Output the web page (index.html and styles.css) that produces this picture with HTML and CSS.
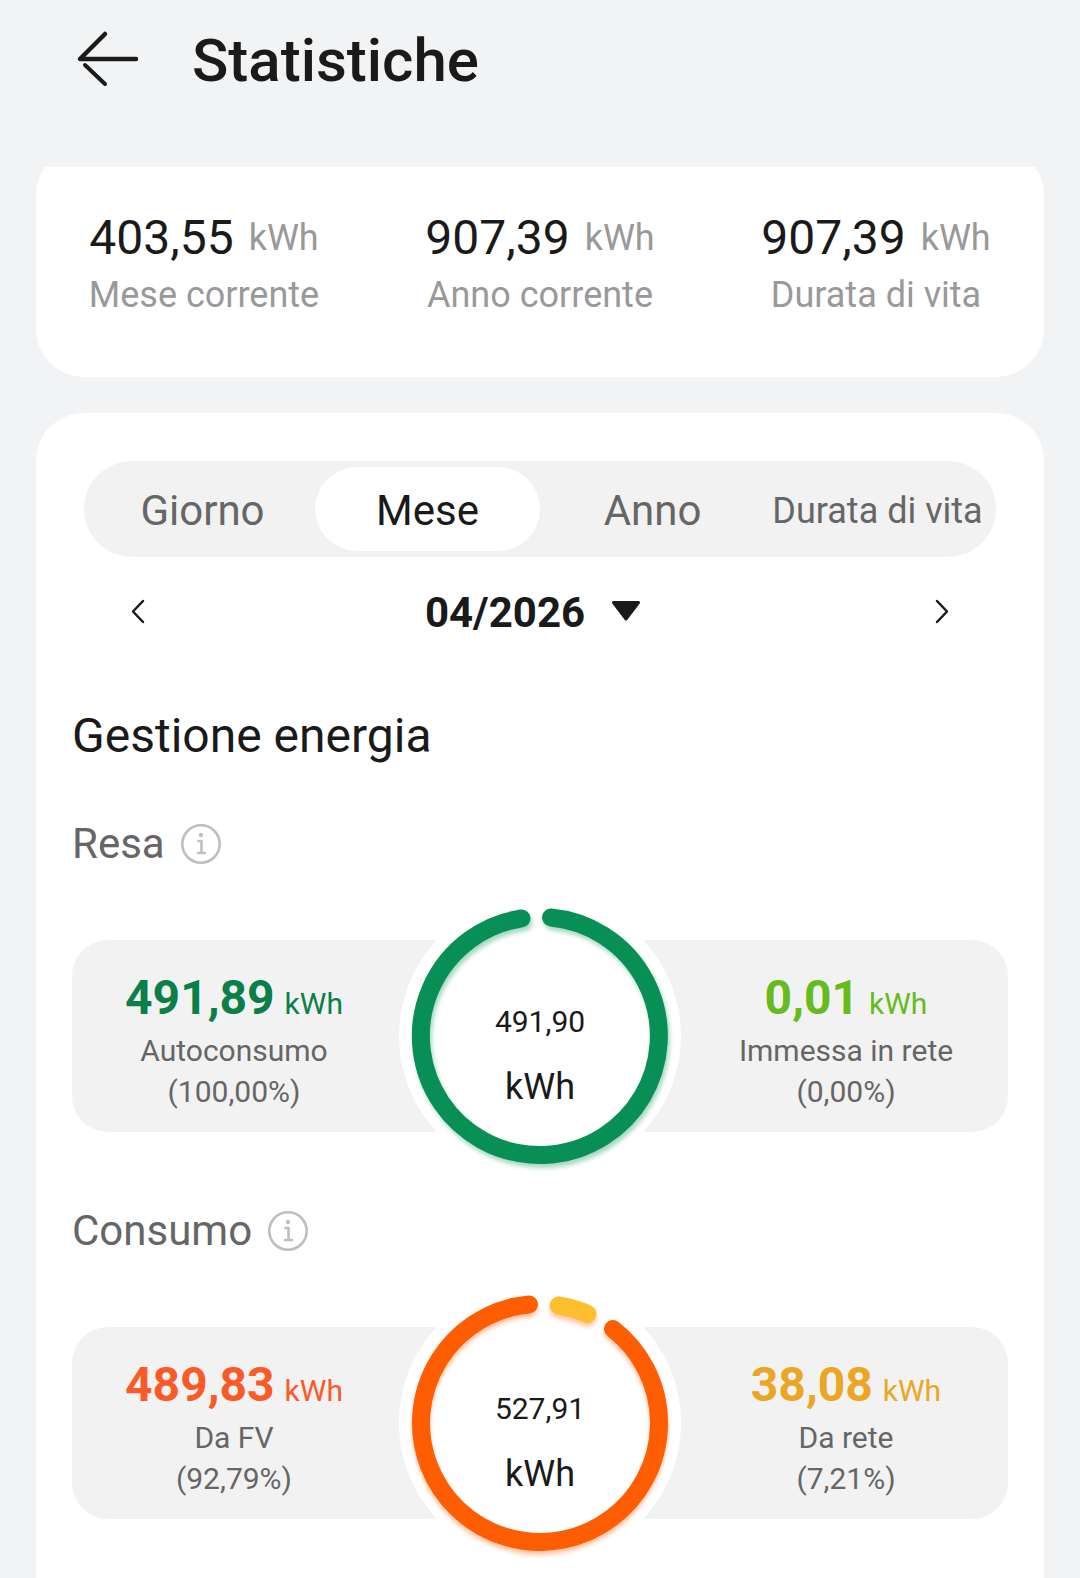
FILE: index.html
```html
<!DOCTYPE html>
<html lang="it">
<head>
    <meta charset="UTF-8">
    <meta name="viewport" content="width=device-width, initial-scale=1.0">
    <title>Statistiche</title>
    <link rel="stylesheet" href="styles.css">
</head>
<body>
    <header class="header">
        <button class="back" type="button" aria-label="Indietro">
            <svg width="72" height="72" viewBox="0 0 72 72">
                <path d="M33 9 8 34H64" />
                <path class="tail" d="M13 40 33 59" />
            </svg>
        </button>
        <h1>Statistiche</h1>
    </header>

    <main class="content">
        <section class="card totals">
            <div class="total">
                <p class="total-value">403,55 <span>kWh</span></p>
                <p class="total-label">Mese corrente</p>
            </div>
            <div class="total">
                <p class="total-value">907,39 <span>kWh</span></p>
                <p class="total-label">Anno corrente</p>
            </div>
            <div class="total">
                <p class="total-value">907,39 <span>kWh</span></p>
                <p class="total-label">Durata di vita</p>
            </div>
        </section>

        <section class="card report">
            <nav class="tabs">
                <button type="button">Giorno</button>
                <button type="button" class="active">Mese</button>
                <button type="button">Anno</button>
                <button type="button" class="small">Durata di vita</button>
            </nav>

            <div class="period">
                <button class="step" type="button" aria-label="Precedente">
                    <svg width="48" height="48" viewBox="0 0 48 48"><path d="M29 13 19 23.5 29 34" /></svg>
                </button>
                <button class="date" type="button">
                    04/2026
                    <svg width="28" height="20" viewBox="0 0 28 20"><path d="M1.500 .500H26.500L14 17Z" /></svg>
                </button>
                <button class="step" type="button" aria-label="Successivo">
                    <svg width="48" height="48" viewBox="0 0 48 48"><path d="M19 13 29 23.5 19 34" /></svg>
                </button>
            </div>

            <h2>Gestione energia</h2>

            <!-- resa -->
            <div class="energy">
                <h3>
                    Resa
                    <button class="info" type="button" aria-label="Info resa">
                        <svg width="40" height="40" viewBox="0 0 40 40">
                            <circle cx="20" cy="20" r="18.7" />
                            <circle class="dot" cx="20" cy="11" r="2.2" />
                            <path d="M17.500 17H20.500V29M17 29H24" />
                        </svg>
                    </button>
                </h3>
                <div class="energy-box">
                    <div class="side">
                        <p class="amount green">491,89 <span>kWh</span></p>
                        <p class="desc">Autoconsumo</p>
                        <p class="desc">(100,00%)</p>
                    </div>
                    <div class="donut">
                        <svg class="ring ring-green" width="282" height="282" viewBox="-141 -141 282 282">
                            <path stroke="#078f55" d="M11 -118.5A119 119 0 1 1 -18.5 -117.6" />
                        </svg>
                        <div class="donut-text">
                            <span class="donut-num">491,90</span>
                            <span class="donut-unit">kWh</span>
                        </div>
                    </div>
                    <div class="side">
                        <p class="amount lime">0,01 <span>kWh</span></p>
                        <p class="desc">Immessa in rete</p>
                        <p class="desc">(0,00%)</p>
                    </div>
                </div>
            </div>

            <!-- consumo -->
            <div class="energy">
                <h3>
                    Consumo
                    <button class="info" type="button" aria-label="Info consumo">
                        <svg width="40" height="40" viewBox="0 0 40 40">
                            <circle cx="20" cy="20" r="18.7" />
                            <circle class="dot" cx="20" cy="11" r="2.2" />
                            <path d="M17.500 17H20.500V29M17 29H24" />
                        </svg>
                    </button>
                </h3>
                <div class="energy-box">
                    <div class="side">
                        <p class="amount orange">489,83 <span>kWh</span></p>
                        <p class="desc">Da FV</p>
                        <p class="desc">(92,79%)</p>
                    </div>
                    <div class="donut">
                        <svg class="ring ring-orange" width="282" height="282" viewBox="-141 -141 282 282">
                            <path stroke="#fe5d02" d="M73 -94A119 119 0 1 1 -11 -118.5" />
                            <path stroke="#fdbf2d" d="M18.7 -117.5A119 119 0 0 1 47.5 -109.1" />
                        </svg>
                        <div class="donut-text">
                            <span class="donut-num">527,91</span>
                            <span class="donut-unit">kWh</span>
                        </div>
                    </div>
                    <div class="side">
                        <p class="amount yellow">38,08 <span>kWh</span></p>
                        <p class="desc">Da rete</p>
                        <p class="desc">(7,21%)</p>
                    </div>
                </div>
            </div>
        </section>
    </main>
</body>
</html>
```
FILE: styles.css
```css
*{
    margin: 0;
    padding: 0;
    box-sizing: border-box;
}
body{
    min-height: 100vh;
    display: flex;
    flex-direction: column;
    background: #f1f3f5;
    color: #1a1a1a;
    font-family: Roboto, "Liberation Sans", sans-serif;
}
button{
    border: none;
    background: none;
    font: inherit;
    color: inherit;
    cursor: pointer;
}
svg{
    display: block;
    fill: none;
    stroke: #1a1a1a;
    stroke-linecap: round;
    stroke-linejoin: round;
}

/* header */
.header{
    display: flex;
    align-items: center;
    gap: 48px;
    padding: 25px 72px 70px;
}
.back svg{
    stroke-width: 4.5;
}
.back .tail{
    stroke-width: 4;
}
.header h1{
    font-size: 60px;
    line-height: 72px;
    font-weight: 500;
}

.content{
    flex: 1;
    display: flex;
    flex-direction: column;
    gap: 36px;
    padding: 0 36px;
    overflow: hidden;
}
.card{
    background: #fff;
    border-radius: 48px;
}
.totals{
    display: grid;
    grid-template-columns: repeat(3, 1fr);
    margin-top: -20px;
    padding: 59px 0 57px;
    text-align: center;
}
.total-value{
    display: flex;
    justify-content: center;
    align-items: center;
    gap: 15px;
    font-size: 48px;
    line-height: 64px;
}
.total-value span{
    font-size: 36px;
    color: #999;
}
.total-label{
    font-size: 36px;
    line-height: 50px;
    color: #999;
}

.report{
    flex: 1;
    padding: 48px 36px 59px;
    border-radius: 48px 48px 0 0;
}
.tabs{
    display: grid;
    grid-template-columns: repeat(4, 1fr);
    margin: 0 12px;
    padding: 6px;
    border-radius: 48px;
    background: #f2f2f2;
}
.tabs button{
    height: 84px;
    padding-top: 3px;
    border-radius: 42px;
    font-size: 42px;
    color: #666;
    white-space: nowrap;
}
.tabs .active{
    background: #fff;
    color: #1a1a1a;
}
.tabs .small{
    font-size: 36px;
}

.period{
    display: flex;
    align-items: center;
    justify-content: space-between;
    height: 110px;
    padding: 0 42px;
}
.step svg{
    stroke-width: 2.5;
}
.date{
    display: flex;
    align-items: center;
    gap: 27px;
    padding-right: 15px;
    font-size: 42px;
    font-weight: 700;
}
.date svg{
    fill: #1a1a1a;
    stroke-width: 3;
    overflow: visible;
}

.report h2{
    margin-top: 37px;
    font-size: 48px;
    line-height: 64px;
    font-weight: 400;
}
.energy{
    margin-top: 52px;
}
.energy + .energy{
    margin-top: 75px;
}
.energy h3{
    display: flex;
    align-items: center;
    gap: 16px;
    font-size: 42px;
    line-height: 48px;
    font-weight: 400;
    color: #666;
}
.info svg{
    stroke: #bfbfbf;
    stroke-width: 2.6;
}
.info .dot{
    fill: #bfbfbf;
    stroke: none;
}
.energy-box{
    display: grid;
    grid-template-columns: 1fr 288px 1fr;
    margin-top: 72px;
    border-radius: 36px;
    background: #f2f2f2;
}
.side{
    padding: 28px 0 20px;
    text-align: center;
}
.amount{
    display: flex;
    justify-content: center;
    align-items: baseline;
    gap: 10px;
    margin-bottom: 2px;
    font-size: 48px;
    line-height: 60px;
    font-weight: 700;
}
.amount span{
    font-size: 30px;
    line-height: 41px;
    font-weight: 400;
}
.desc{
    font-size: 30px;
    line-height: 41px;
    color: #666;
}
.green{
    color: #0b7f49;
}
.lime{
    color: #67bb1d;
}
.orange{
    color: #f95a28;
}
.yellow{
    color: #eaa624;
}

/* donut, taller than the grey box behind it */
.donut{
    position: relative;
    width: 282px;
    height: 282px;
    margin: -45px auto;
    border-radius: 50%;
    background: #fff;
}
.ring{
    stroke-width: 18;
}
.ring-green{
    filter: drop-shadow(2px 4px 2px rgba(7,143,85,0.35));
}
.ring-orange{
    filter: drop-shadow(0 4px 2px rgba(254,93,2,0.35));
}
.donut-text{
    position: absolute;
    inset: 0;
    display: flex;
    flex-direction: column;
    align-items: center;
    justify-content: center;
    gap: 21px;
    padding-top: 40px;
}
.donut-num{
    font-size: 30px;
    line-height: 41px;
}
.donut-unit{
    font-size: 36px;
    line-height: 48px;
}
```
